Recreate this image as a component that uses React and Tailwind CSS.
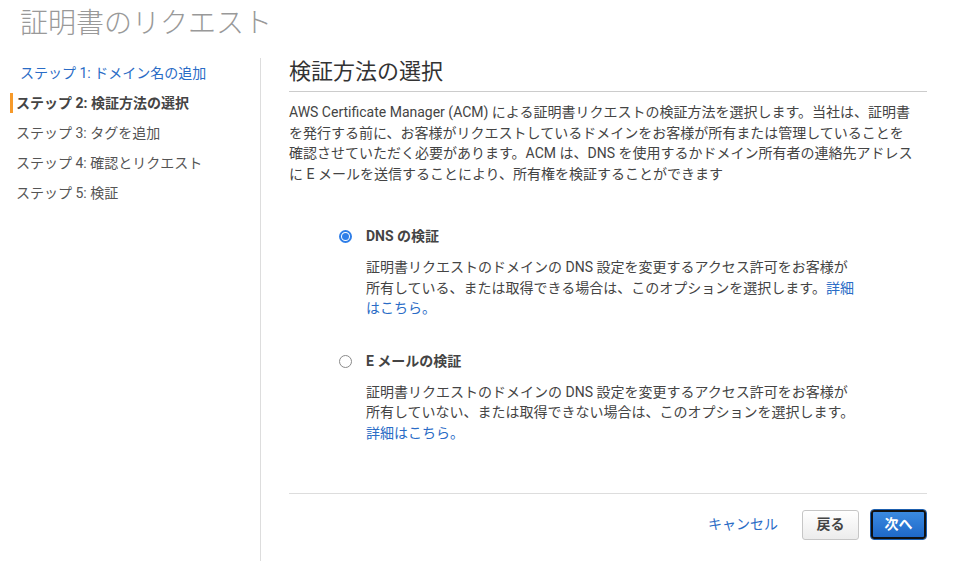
import React, { useState } from 'react';

const steps = [
  { label: 'ステップ 1: ドメイン名の追加', state: 'done' },
  { label: 'ステップ 2: 検証方法の選択', state: 'active' },
  { label: 'ステップ 3: タグを追加', state: 'todo' },
  { label: 'ステップ 4: 確認とリクエスト', state: 'todo' },
  { label: 'ステップ 5: 検証', state: 'todo' },
];

function Radio({ checked, onClick }) {
  return (
    <button
      onClick={onClick}
      className={`mt-[4px] w-[13px] h-[13px] rounded-full flex items-center justify-center shrink-0 bg-white ${
        checked ? 'border-2 border-[#2f7ee8]' : 'border border-[#8a8a8a]'
      }`}
    >
      {checked && <span className="w-[7px] h-[7px] rounded-full bg-[#2f7ee8]" />}
    </button>
  );
}

function Option({ checked, onClick, title, children }) {
  return (
    <div className="flex gap-[14px]">
      <Radio checked={checked} onClick={onClick} />
      <div>
        <div className="font-bold text-[14px] leading-[20px] text-[#444]">{title}</div>
        <p className="mt-[11px] w-[495px] text-[14px] leading-[20.5px] text-[#444]">{children}</p>
      </div>
    </div>
  );
}

export default function App() {
  const [method, setMethod] = useState('dns');

  return (
    <div
      className="w-full h-[561px] bg-white text-[#444] overflow-hidden"
      style={{ fontFamily: 'Roboto, "Noto Sans CJK JP", sans-serif' }}
    >
      <h1 className="h-[58px] pl-[20px] pt-[6px] text-[28px] leading-[36px] font-light text-[#999]">
        証明書のリクエスト
      </h1>

      <div className="flex h-[503px]">
        <nav className="w-[261px] border-r border-[#ddd] shrink-0">
          {steps.map((s) => (
            <div key={s.label} className="h-[30px] flex items-center">
              <span
                className={`w-[3px] h-[20px] ml-[10px] ${s.state === 'active' ? 'bg-[#f79a2a]' : ''}`}
              />
              <span
                className={`text-[14px] ${
                  s.state === 'done'
                    ? 'ml-[7px] text-[#2a6cc6]'
                    : s.state === 'active'
                    ? 'ml-[3px] font-bold text-[#444]'
                    : 'ml-[3px] text-[#555]'
                }`}
              >
                {s.label}
              </span>
            </div>
          ))}
        </nav>

        <main className="flex-1 px-[28px] flex flex-col">
          <h2 className="text-[22px] leading-[28px] pb-[5px] border-b border-[#ccc] text-[#333]">
            検証方法の選択
          </h2>
          <p className="mt-[10px] w-[628px] text-[14px] leading-[20.5px] text-[#444]">
            AWS Certificate Manager (ACM) による証明書リクエストの検証方法を選択します。当社は、証明書を発行する前に、お客様がリクエストしているドメインをお客様が所有または管理していることを確認させていただく必要があります。ACM は、DNS を使用するかドメイン所有者の連絡先アドレスに E メールを送信することにより、所有権を検証することができます
          </p>

          <div className="mt-[42px] pl-[50px] flex flex-col gap-[32px]">
            <Option checked={method === 'dns'} onClick={() => setMethod('dns')} title="DNS の検証">
              証明書リクエストのドメインの DNS 設定を変更するアクセス許可をお客様が所有している、または取得できる場合は、このオプションを選択します。
              <a href="#" className="text-[#2a6cc6]">詳細はこちら。</a>
            </Option>
            <Option checked={method === 'email'} onClick={() => setMethod('email')} title="E メールの検証">
              証明書リクエストのドメインの DNS 設定を変更するアクセス許可をお客様が所有していない、または取得できない場合は、このオプションを選択します。
              <a href="#" className="text-[#2a6cc6]">詳細はこちら。</a>
            </Option>
          </div>

          <div className="mt-auto mb-[21px] border-t border-[#ddd] pt-[15px] flex items-center justify-end">
            <a href="#" className="text-[14px] text-[#2a6cc6] mr-[24px]">キャンセル</a>
            <button className="w-[57px] h-[30px] rounded-[3px] border border-[#c6c6c6] bg-gradient-to-b from-white to-[#ececec] text-[14px] font-bold text-[#444] mr-[11px]">
              戻る
            </button>
            <button className="w-[57px] h-[31px] rounded-[4px] border border-[#1d5fae] p-0">
              <span className="flex w-full h-full items-center justify-center rounded-[3px] border-2 border-[#111] bg-gradient-to-b from-[#3b8ae0] to-[#1e68c8] text-[14px] font-bold text-white">
                次へ
              </span>
            </button>
          </div>
        </main>
      </div>
    </div>
  );
}
